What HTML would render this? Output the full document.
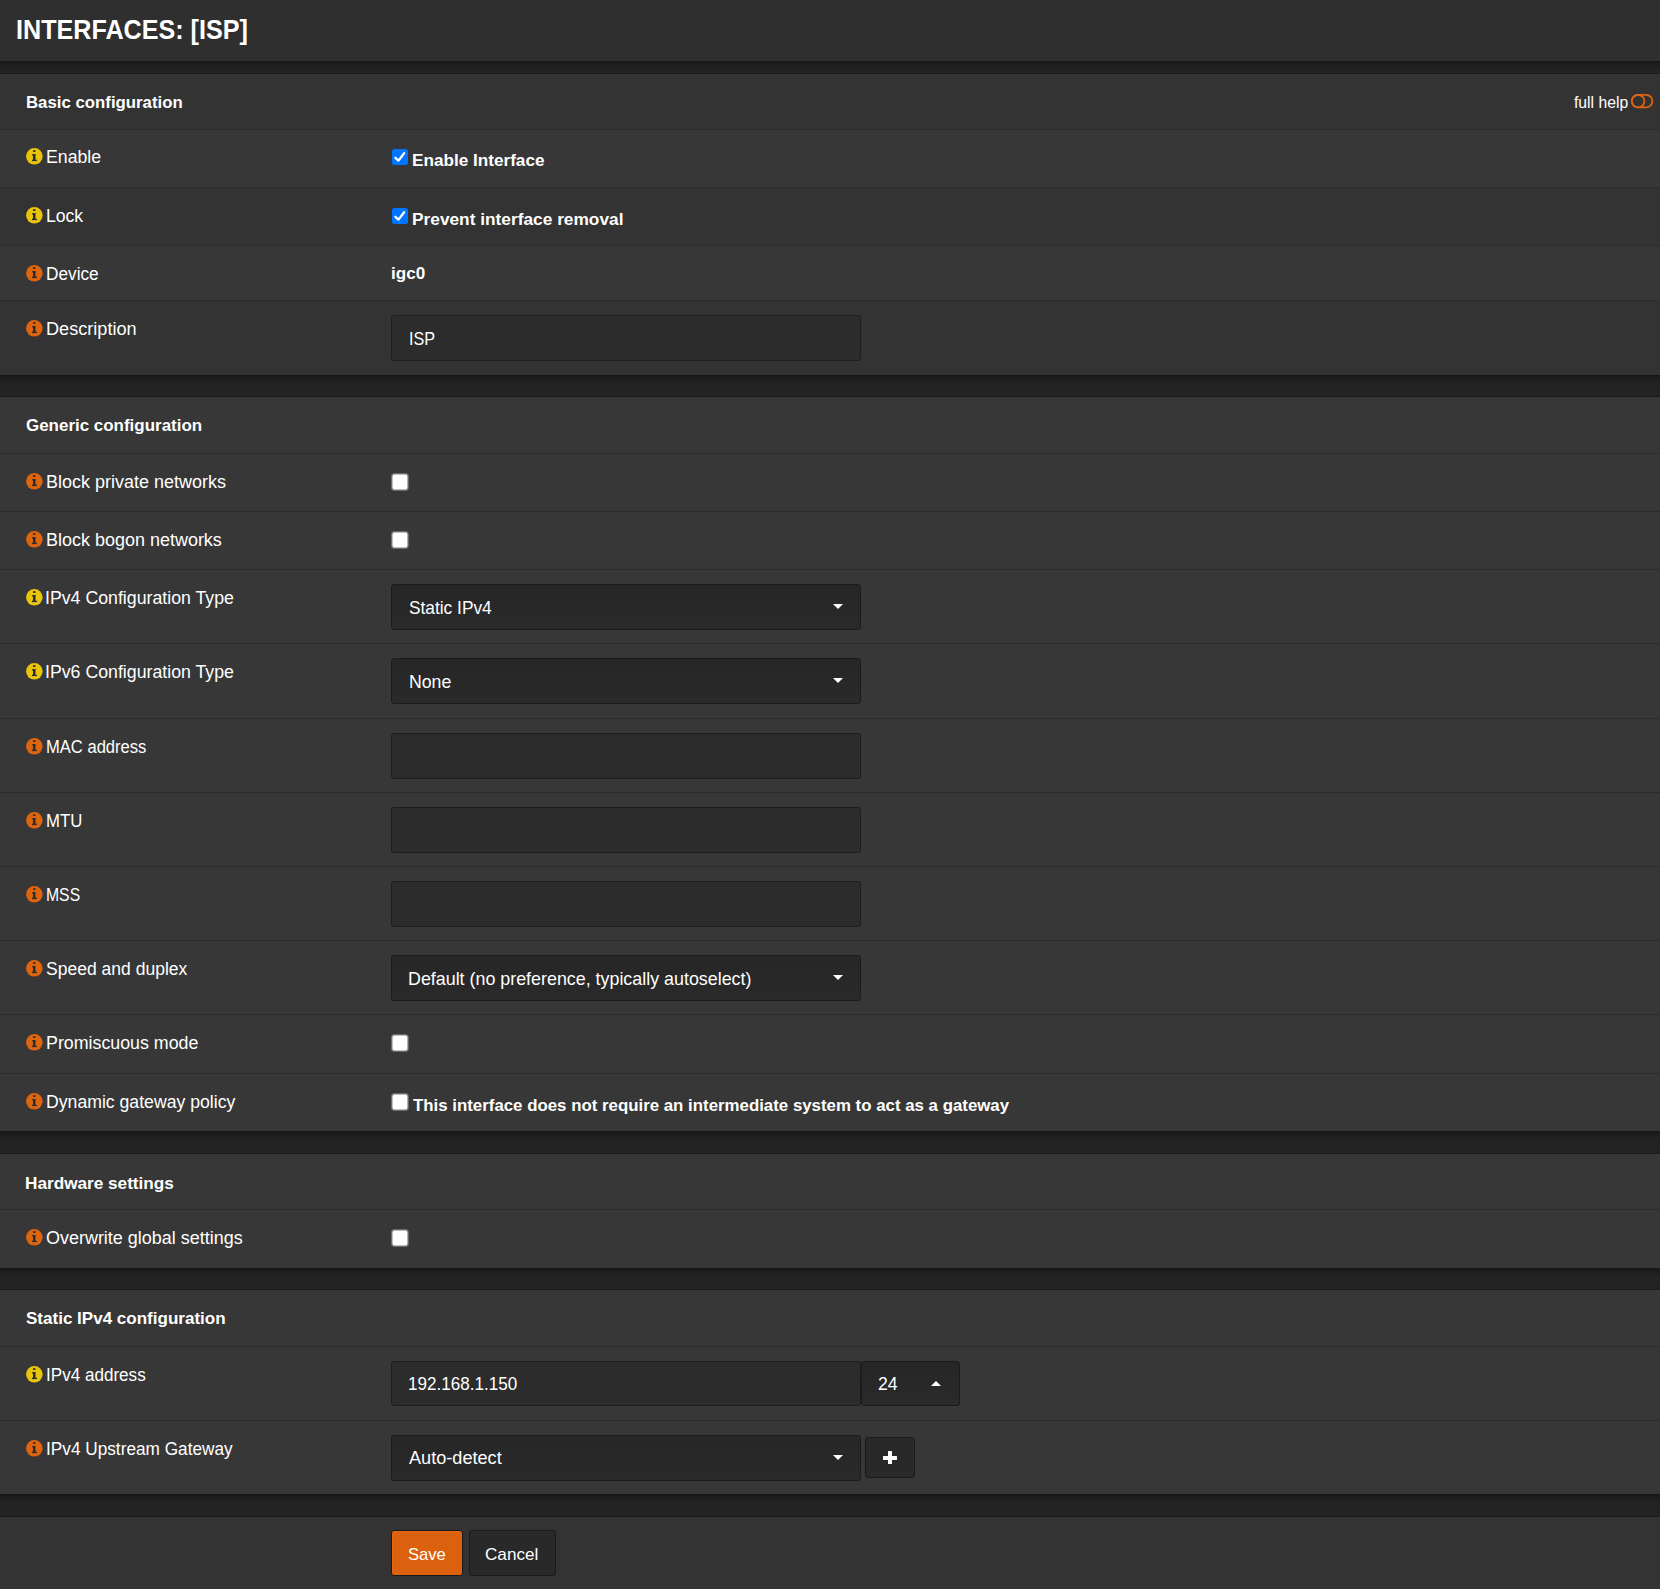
<!DOCTYPE html>
<html><head><meta charset="utf-8"><title>Interfaces: [ISP]</title>
<style>
html,body{margin:0;padding:0}
body{width:1660px;height:1589px;overflow:hidden;position:relative;background:#232323;font-family:"Liberation Sans",sans-serif;color:#fff}
.a{position:absolute}
.t{position:absolute;white-space:nowrap}
</style></head><body>
<div class="a" style="left:0px;top:0px;width:1660px;height:61px;background:#2f2f2f"></div>
<div id="t1" class="t" style="left:15.65px;top:15.50px;font-size:28px;line-height:28px;font-weight:bold;color:#fff;letter-spacing:0px;transform:scaleX(0.8980);transform-origin:0 0;">INTERFACES: [ISP]</div>
<div class="a" style="left:0px;top:61px;width:1660px;height:13px;background:linear-gradient(#161616 0px,#1b1b1b 2px,#1f1f1f 5px,#222 9px,#232323 12px,#232323 12px,#1b1b1b 12px)"></div>
<div class="a" style="left:0px;top:74px;width:1660px;height:55px;background:#333"></div>
<div id="t2" class="t" style="left:25.51px;top:93.61px;font-size:17px;line-height:17px;font-weight:bold;color:#fff;letter-spacing:0px;transform:scaleX(0.9873);transform-origin:0 0;">Basic configuration</div>
<div id="t3" class="t" style="left:1573.60px;top:95.49px;font-size:15.6px;line-height:15.6px;font-weight:normal;color:#fff;letter-spacing:0px;transform:scaleX(1.0076);transform-origin:0 0;">full help</div>
<svg class="a" style="left:1630px;top:93px" width="24" height="16" viewBox="0 0 24 16"><rect x="1.8" y="1.8" width="20.6" height="12.6" rx="6.3" fill="none" stroke="#e0640f" stroke-width="1.7"/><circle cx="8.1" cy="8.1" r="6.3" fill="none" stroke="#e0640f" stroke-width="1.7"/></svg>
<div class="a" style="left:0px;top:129px;width:1660px;height:1px;background:#2c2c2c"></div>
<div class="a" style="left:0px;top:130px;width:1660px;height:57px;background:#373737"></div>
<div class="a" style="left:0px;top:187px;width:1660px;height:1px;background:#2c2c2c"></div>
<svg class="a" style="left:26px;top:148px" width="17" height="17" viewBox="0 0 17 17"><circle cx="8.35" cy="8.3" r="8.3" fill="#e8c40b"/><g fill="#2b2e31"><rect x="7" y="2.2" width="2.5" height="1.7"/><rect x="6" y="6.2" width="3.5" height="1.2"/><rect x="7" y="6.2" width="2.5" height="6"/><rect x="6" y="11.7" width="4.9" height="1.4"/></g></svg>
<div id="t4" class="t" style="left:45.99px;top:148.69px;font-size:17.5px;line-height:17.5px;font-weight:normal;color:#fff;letter-spacing:0px;transform:scaleX(1.0114);transform-origin:0 0;">Enable</div>
<svg class="a" style="left:392px;top:149px" width="16" height="16" viewBox="0 0 16 16"><rect x="0" y="0" width="16" height="16" rx="2.5" fill="#0075ff"/><path d="M3.4 8.8 L6.5 11.6 L12.1 4.2" stroke="#fff" stroke-width="2.3" fill="none" stroke-linecap="round" stroke-linejoin="round"/></svg>
<div id="t5" class="t" style="left:412.18px;top:152.58px;font-size:16.8px;line-height:16.8px;font-weight:bold;color:#fff;letter-spacing:0px;transform:scaleX(1.0219);transform-origin:0 0;">Enable Interface</div>
<div class="a" style="left:0px;top:188px;width:1660px;height:57px;background:#333"></div>
<div class="a" style="left:0px;top:245px;width:1660px;height:1px;background:#2c2c2c"></div>
<svg class="a" style="left:26px;top:207px" width="17" height="17" viewBox="0 0 17 17"><circle cx="8.35" cy="8.3" r="8.3" fill="#e8c40b"/><g fill="#2b2e31"><rect x="7" y="2.2" width="2.5" height="1.7"/><rect x="6" y="6.2" width="3.5" height="1.2"/><rect x="7" y="6.2" width="2.5" height="6"/><rect x="6" y="11.7" width="4.9" height="1.4"/></g></svg>
<div id="t6" class="t" style="left:45.99px;top:207.69px;font-size:17.5px;line-height:17.5px;font-weight:normal;color:#fff;letter-spacing:0px;transform:scaleX(1.0056);transform-origin:0 0;">Lock</div>
<svg class="a" style="left:392px;top:208px" width="16" height="16" viewBox="0 0 16 16"><rect x="0" y="0" width="16" height="16" rx="2.5" fill="#0075ff"/><path d="M3.4 8.8 L6.5 11.6 L12.1 4.2" stroke="#fff" stroke-width="2.3" fill="none" stroke-linecap="round" stroke-linejoin="round"/></svg>
<div id="t7" class="t" style="left:412.17px;top:211.78px;font-size:16.8px;line-height:16.8px;font-weight:bold;color:#fff;letter-spacing:0px;transform:scaleX(1.0305);transform-origin:0 0;">Prevent interface removal</div>
<div class="a" style="left:0px;top:246px;width:1660px;height:54px;background:#373737"></div>
<div class="a" style="left:0px;top:300px;width:1660px;height:1px;background:#2c2c2c"></div>
<svg class="a" style="left:26px;top:265px" width="17" height="17" viewBox="0 0 17 17"><circle cx="8.35" cy="8.3" r="8.3" fill="#df640e"/><g fill="#2b2e31"><rect x="7" y="2.2" width="2.5" height="1.7"/><rect x="6" y="6.2" width="3.5" height="1.2"/><rect x="7" y="6.2" width="2.5" height="6"/><rect x="6" y="11.7" width="4.9" height="1.4"/></g></svg>
<div id="t8" class="t" style="left:46.02px;top:265.69px;font-size:17.5px;line-height:17.5px;font-weight:normal;color:#fff;letter-spacing:0px;transform:scaleX(0.9846);transform-origin:0 0;">Device</div>
<div id="t9" class="t" style="left:390.78px;top:265.78px;font-size:16.8px;line-height:16.8px;font-weight:bold;color:#fff;letter-spacing:0px;transform:scaleX(1.0188);transform-origin:0 0;">igc0</div>
<div class="a" style="left:0px;top:301px;width:1660px;height:74px;background:#333"></div>
<svg class="a" style="left:26px;top:320px" width="17" height="17" viewBox="0 0 17 17"><circle cx="8.35" cy="8.3" r="8.3" fill="#df640e"/><g fill="#2b2e31"><rect x="7" y="2.2" width="2.5" height="1.7"/><rect x="6" y="6.2" width="3.5" height="1.2"/><rect x="7" y="6.2" width="2.5" height="6"/><rect x="6" y="11.7" width="4.9" height="1.4"/></g></svg>
<div id="t10" class="t" style="left:45.97px;top:320.69px;font-size:17.5px;line-height:17.5px;font-weight:normal;color:#fff;letter-spacing:0px;transform:scaleX(1.0349);transform-origin:0 0;">Description</div>
<div class="a" style="left:391px;top:315px;width:470px;height:46px;box-sizing:border-box;background:#2c2c2c;border:1px solid #1d1d1d;border-radius:3px"></div>
<div id="t11" class="t" style="left:409.14px;top:331.02px;font-size:17.7px;line-height:17.7px;font-weight:normal;color:#fff;letter-spacing:0px;transform:scaleX(0.9159);transform-origin:0 0;">ISP</div>
<div class="a" style="left:0px;top:375px;width:1660px;height:22px;background:linear-gradient(#161616 0px,#1b1b1b 2px,#1f1f1f 5px,#222 9px,#232323 12px,#232323 21px,#1b1b1b 21px)"></div>
<div class="a" style="left:0px;top:397px;width:1660px;height:56px;background:#373737"></div>
<div id="t12" class="t" style="left:25.50px;top:417.21px;font-size:17px;line-height:17px;font-weight:bold;color:#fff;letter-spacing:0px;transform:scaleX(0.9971);transform-origin:0 0;">Generic configuration</div>
<div class="a" style="left:0px;top:453px;width:1660px;height:1px;background:#2c2c2c"></div>
<div class="a" style="left:0px;top:454px;width:1660px;height:57px;background:#373737"></div>
<div class="a" style="left:0px;top:511px;width:1660px;height:1px;background:#2c2c2c"></div>
<svg class="a" style="left:26px;top:473px" width="17" height="17" viewBox="0 0 17 17"><circle cx="8.35" cy="8.3" r="8.3" fill="#df640e"/><g fill="#2b2e31"><rect x="7" y="2.2" width="2.5" height="1.7"/><rect x="6" y="6.2" width="3.5" height="1.2"/><rect x="7" y="6.2" width="2.5" height="6"/><rect x="6" y="11.7" width="4.9" height="1.4"/></g></svg>
<div id="t13" class="t" style="left:45.97px;top:473.69px;font-size:17.5px;line-height:17.5px;font-weight:normal;color:#fff;letter-spacing:0px;transform:scaleX(1.0276);transform-origin:0 0;">Block private networks</div>
<svg class="a" style="left:391px;top:473px" width="18" height="18" viewBox="0 0 18 18"><rect x="0.2" y="0.2" width="17.5" height="17.5" rx="3" fill="#7f7f7f"/><rect x="1.5" y="1.5" width="14.9" height="14.9" rx="2" fill="#fff"/></svg>
<div class="a" style="left:0px;top:512px;width:1660px;height:57px;background:#373737"></div>
<div class="a" style="left:0px;top:569px;width:1660px;height:1px;background:#2c2c2c"></div>
<svg class="a" style="left:26px;top:531px" width="17" height="17" viewBox="0 0 17 17"><circle cx="8.35" cy="8.3" r="8.3" fill="#df640e"/><g fill="#2b2e31"><rect x="7" y="2.2" width="2.5" height="1.7"/><rect x="6" y="6.2" width="3.5" height="1.2"/><rect x="7" y="6.2" width="2.5" height="6"/><rect x="6" y="11.7" width="4.9" height="1.4"/></g></svg>
<div id="t14" class="t" style="left:45.97px;top:531.69px;font-size:17.5px;line-height:17.5px;font-weight:normal;color:#fff;letter-spacing:0px;transform:scaleX(1.0271);transform-origin:0 0;">Block bogon networks</div>
<svg class="a" style="left:391px;top:531px" width="18" height="18" viewBox="0 0 18 18"><rect x="0.2" y="0.2" width="17.5" height="17.5" rx="3" fill="#7f7f7f"/><rect x="1.5" y="1.5" width="14.9" height="14.9" rx="2" fill="#fff"/></svg>
<div class="a" style="left:0px;top:570px;width:1660px;height:73px;background:#373737"></div>
<div class="a" style="left:0px;top:643px;width:1660px;height:1px;background:#2c2c2c"></div>
<svg class="a" style="left:26px;top:589px" width="17" height="17" viewBox="0 0 17 17"><circle cx="8.35" cy="8.3" r="8.3" fill="#e8c40b"/><g fill="#2b2e31"><rect x="7" y="2.2" width="2.5" height="1.7"/><rect x="6" y="6.2" width="3.5" height="1.2"/><rect x="7" y="6.2" width="2.5" height="6"/><rect x="6" y="11.7" width="4.9" height="1.4"/></g></svg>
<div id="t15" class="t" style="left:44.97px;top:589.69px;font-size:17.5px;line-height:17.5px;font-weight:normal;color:#fff;letter-spacing:0px;transform:scaleX(1.0130);transform-origin:0 0;">IPv4 Configuration Type</div>
<div class="a" style="left:391px;top:584px;width:470px;height:46px;box-sizing:border-box;background:linear-gradient(#262626,#2a2a2a);border:1px solid #1b1b1b;border-radius:3px"></div>
<div id="t16" class="t" style="left:408.62px;top:599.52px;font-size:17.7px;line-height:17.7px;font-weight:normal;color:#fff;letter-spacing:0px;transform:scaleX(0.9783);transform-origin:0 0;">Static IPv4</div>
<div class="a" style="left:833px;top:604px;width:0;height:0;border-left:5px solid transparent;border-right:5px solid transparent;border-top:5px solid #fff"></div>
<div class="a" style="left:0px;top:644px;width:1660px;height:74px;background:#373737"></div>
<div class="a" style="left:0px;top:718px;width:1660px;height:1px;background:#2c2c2c"></div>
<svg class="a" style="left:26px;top:663px" width="17" height="17" viewBox="0 0 17 17"><circle cx="8.35" cy="8.3" r="8.3" fill="#e8c40b"/><g fill="#2b2e31"><rect x="7" y="2.2" width="2.5" height="1.7"/><rect x="6" y="6.2" width="3.5" height="1.2"/><rect x="7" y="6.2" width="2.5" height="6"/><rect x="6" y="11.7" width="4.9" height="1.4"/></g></svg>
<div id="t17" class="t" style="left:44.97px;top:663.69px;font-size:17.5px;line-height:17.5px;font-weight:normal;color:#fff;letter-spacing:0px;transform:scaleX(1.0130);transform-origin:0 0;">IPv6 Configuration Type</div>
<div class="a" style="left:391px;top:658px;width:470px;height:46px;box-sizing:border-box;background:linear-gradient(#262626,#2a2a2a);border:1px solid #1b1b1b;border-radius:3px"></div>
<div id="t18" class="t" style="left:409.00px;top:673.52px;font-size:17.7px;line-height:17.7px;font-weight:normal;color:#fff;letter-spacing:0px;">None</div>
<div class="a" style="left:833px;top:678px;width:0;height:0;border-left:5px solid transparent;border-right:5px solid transparent;border-top:5px solid #fff"></div>
<div class="a" style="left:0px;top:719px;width:1660px;height:73px;background:#373737"></div>
<div class="a" style="left:0px;top:792px;width:1660px;height:1px;background:#2c2c2c"></div>
<svg class="a" style="left:26px;top:738px" width="17" height="17" viewBox="0 0 17 17"><circle cx="8.35" cy="8.3" r="8.3" fill="#df640e"/><g fill="#2b2e31"><rect x="7" y="2.2" width="2.5" height="1.7"/><rect x="6" y="6.2" width="3.5" height="1.2"/><rect x="7" y="6.2" width="2.5" height="6"/><rect x="6" y="11.7" width="4.9" height="1.4"/></g></svg>
<div id="t19" class="t" style="left:46.05px;top:738.69px;font-size:17.5px;line-height:17.5px;font-weight:normal;color:#fff;letter-spacing:0px;transform:scaleX(0.9467);transform-origin:0 0;">MAC address</div>
<div class="a" style="left:391px;top:733px;width:470px;height:46px;box-sizing:border-box;background:#2c2c2c;border:1px solid #1d1d1d;border-radius:3px"></div>
<div class="a" style="left:0px;top:793px;width:1660px;height:73px;background:#373737"></div>
<div class="a" style="left:0px;top:866px;width:1660px;height:1px;background:#2c2c2c"></div>
<svg class="a" style="left:26px;top:812px" width="17" height="17" viewBox="0 0 17 17"><circle cx="8.35" cy="8.3" r="8.3" fill="#df640e"/><g fill="#2b2e31"><rect x="7" y="2.2" width="2.5" height="1.7"/><rect x="6" y="6.2" width="3.5" height="1.2"/><rect x="7" y="6.2" width="2.5" height="6"/><rect x="6" y="11.7" width="4.9" height="1.4"/></g></svg>
<div id="t20" class="t" style="left:46.04px;top:812.69px;font-size:17.5px;line-height:17.5px;font-weight:normal;color:#fff;letter-spacing:0px;transform:scaleX(0.9556);transform-origin:0 0;">MTU</div>
<div class="a" style="left:391px;top:807px;width:470px;height:46px;box-sizing:border-box;background:#2c2c2c;border:1px solid #1d1d1d;border-radius:3px"></div>
<div class="a" style="left:0px;top:867px;width:1660px;height:73px;background:#373737"></div>
<div class="a" style="left:0px;top:940px;width:1660px;height:1px;background:#2c2c2c"></div>
<svg class="a" style="left:26px;top:886px" width="17" height="17" viewBox="0 0 17 17"><circle cx="8.35" cy="8.3" r="8.3" fill="#df640e"/><g fill="#2b2e31"><rect x="7" y="2.2" width="2.5" height="1.7"/><rect x="6" y="6.2" width="3.5" height="1.2"/><rect x="7" y="6.2" width="2.5" height="6"/><rect x="6" y="11.7" width="4.9" height="1.4"/></g></svg>
<div id="t21" class="t" style="left:46.10px;top:886.69px;font-size:17.5px;line-height:17.5px;font-weight:normal;color:#fff;letter-spacing:0px;transform:scaleX(0.9000);transform-origin:0 0;">MSS</div>
<div class="a" style="left:391px;top:881px;width:470px;height:46px;box-sizing:border-box;background:#2c2c2c;border:1px solid #1d1d1d;border-radius:3px"></div>
<div class="a" style="left:0px;top:941px;width:1660px;height:73px;background:#373737"></div>
<div class="a" style="left:0px;top:1014px;width:1660px;height:1px;background:#2c2c2c"></div>
<svg class="a" style="left:26px;top:960px" width="17" height="17" viewBox="0 0 17 17"><circle cx="8.35" cy="8.3" r="8.3" fill="#df640e"/><g fill="#2b2e31"><rect x="7" y="2.2" width="2.5" height="1.7"/><rect x="6" y="6.2" width="3.5" height="1.2"/><rect x="7" y="6.2" width="2.5" height="6"/><rect x="6" y="11.7" width="4.9" height="1.4"/></g></svg>
<div id="t22" class="t" style="left:46.00px;top:960.69px;font-size:17.5px;line-height:17.5px;font-weight:normal;color:#fff;letter-spacing:0px;transform:scaleX(1.0014);transform-origin:0 0;">Speed and duplex</div>
<div class="a" style="left:391px;top:955px;width:470px;height:46px;box-sizing:border-box;background:linear-gradient(#262626,#2a2a2a);border:1px solid #1b1b1b;border-radius:3px"></div>
<div id="t23" class="t" style="left:408.39px;top:970.52px;font-size:17.7px;line-height:17.7px;font-weight:normal;color:#fff;letter-spacing:0px;transform:scaleX(1.0095);transform-origin:0 0;">Default (no preference, typically autoselect)</div>
<div class="a" style="left:833px;top:975px;width:0;height:0;border-left:5px solid transparent;border-right:5px solid transparent;border-top:5px solid #fff"></div>
<div class="a" style="left:0px;top:1015px;width:1660px;height:58px;background:#373737"></div>
<div class="a" style="left:0px;top:1073px;width:1660px;height:1px;background:#2c2c2c"></div>
<svg class="a" style="left:26px;top:1034px" width="17" height="17" viewBox="0 0 17 17"><circle cx="8.35" cy="8.3" r="8.3" fill="#df640e"/><g fill="#2b2e31"><rect x="7" y="2.2" width="2.5" height="1.7"/><rect x="6" y="6.2" width="3.5" height="1.2"/><rect x="7" y="6.2" width="2.5" height="6"/><rect x="6" y="11.7" width="4.9" height="1.4"/></g></svg>
<div id="t24" class="t" style="left:45.98px;top:1034.69px;font-size:17.5px;line-height:17.5px;font-weight:normal;color:#fff;letter-spacing:0px;transform:scaleX(1.0176);transform-origin:0 0;">Promiscuous mode</div>
<svg class="a" style="left:391px;top:1034px" width="18" height="18" viewBox="0 0 18 18"><rect x="0.2" y="0.2" width="17.5" height="17.5" rx="3" fill="#7f7f7f"/><rect x="1.5" y="1.5" width="14.9" height="14.9" rx="2" fill="#fff"/></svg>
<div class="a" style="left:0px;top:1074px;width:1660px;height:57px;background:#373737"></div>
<svg class="a" style="left:26px;top:1093px" width="17" height="17" viewBox="0 0 17 17"><circle cx="8.35" cy="8.3" r="8.3" fill="#df640e"/><g fill="#2b2e31"><rect x="7" y="2.2" width="2.5" height="1.7"/><rect x="6" y="6.2" width="3.5" height="1.2"/><rect x="7" y="6.2" width="2.5" height="6"/><rect x="6" y="11.7" width="4.9" height="1.4"/></g></svg>
<div id="t25" class="t" style="left:45.99px;top:1093.69px;font-size:17.5px;line-height:17.5px;font-weight:normal;color:#fff;letter-spacing:0px;transform:scaleX(1.0086);transform-origin:0 0;">Dynamic gateway policy</div>
<svg class="a" style="left:391px;top:1093px" width="18" height="18" viewBox="0 0 18 18"><rect x="0.2" y="0.2" width="17.5" height="17.5" rx="3" fill="#7f7f7f"/><rect x="1.5" y="1.5" width="14.9" height="14.9" rx="2" fill="#fff"/></svg>
<div id="t26" class="t" style="left:412.60px;top:1097.78px;font-size:16.8px;line-height:16.8px;font-weight:bold;color:#fff;letter-spacing:0px;transform:scaleX(1.0034);transform-origin:0 0;">This interface does not require an intermediate system to act as a gateway</div>
<div class="a" style="left:0px;top:1131px;width:1660px;height:23px;background:linear-gradient(#161616 0px,#1b1b1b 2px,#1f1f1f 5px,#222 9px,#232323 12px,#232323 22px,#1b1b1b 22px)"></div>
<div class="a" style="left:0px;top:1154px;width:1660px;height:55px;background:#373737"></div>
<div id="t27" class="t" style="left:25.49px;top:1174.61px;font-size:17px;line-height:17px;font-weight:bold;color:#fff;letter-spacing:0px;transform:scaleX(1.0103);transform-origin:0 0;">Hardware settings</div>
<div class="a" style="left:0px;top:1209px;width:1660px;height:1px;background:#2c2c2c"></div>
<div class="a" style="left:0px;top:1210px;width:1660px;height:58px;background:#373737"></div>
<svg class="a" style="left:26px;top:1229px" width="17" height="17" viewBox="0 0 17 17"><circle cx="8.35" cy="8.3" r="8.3" fill="#df640e"/><g fill="#2b2e31"><rect x="7" y="2.2" width="2.5" height="1.7"/><rect x="6" y="6.2" width="3.5" height="1.2"/><rect x="7" y="6.2" width="2.5" height="6"/><rect x="6" y="11.7" width="4.9" height="1.4"/></g></svg>
<div id="t28" class="t" style="left:45.97px;top:1229.69px;font-size:17.5px;line-height:17.5px;font-weight:normal;color:#fff;letter-spacing:0px;transform:scaleX(1.0263);transform-origin:0 0;">Overwrite global settings</div>
<svg class="a" style="left:391px;top:1229px" width="18" height="18" viewBox="0 0 18 18"><rect x="0.2" y="0.2" width="17.5" height="17.5" rx="3" fill="#7f7f7f"/><rect x="1.5" y="1.5" width="14.9" height="14.9" rx="2" fill="#fff"/></svg>
<div class="a" style="left:0px;top:1268px;width:1660px;height:22px;background:linear-gradient(#161616 0px,#1b1b1b 2px,#1f1f1f 5px,#222 9px,#232323 12px,#232323 21px,#1b1b1b 21px)"></div>
<div class="a" style="left:0px;top:1290px;width:1660px;height:56px;background:#373737"></div>
<div id="t29" class="t" style="left:25.50px;top:1310.31px;font-size:17px;line-height:17px;font-weight:bold;color:#fff;letter-spacing:0px;transform:scaleX(1.0015);transform-origin:0 0;">Static IPv4 configuration</div>
<div class="a" style="left:0px;top:1346px;width:1660px;height:1px;background:#2c2c2c"></div>
<div class="a" style="left:0px;top:1347px;width:1660px;height:73px;background:#373737"></div>
<div class="a" style="left:0px;top:1420px;width:1660px;height:1px;background:#2c2c2c"></div>
<svg class="a" style="left:26px;top:1366px" width="17" height="17" viewBox="0 0 17 17"><circle cx="8.35" cy="8.3" r="8.3" fill="#e8c40b"/><g fill="#2b2e31"><rect x="7" y="2.2" width="2.5" height="1.7"/><rect x="6" y="6.2" width="3.5" height="1.2"/><rect x="7" y="6.2" width="2.5" height="6"/><rect x="6" y="11.7" width="4.9" height="1.4"/></g></svg>
<div id="t30" class="t" style="left:46.04px;top:1366.69px;font-size:17.5px;line-height:17.5px;font-weight:normal;color:#fff;letter-spacing:0px;transform:scaleX(0.9760);transform-origin:0 0;">IPv4 address</div>
<div class="a" style="left:391px;top:1361px;width:470px;height:45px;box-sizing:border-box;background:#2c2c2c;border:1px solid #1d1d1d;border-radius:3px"></div>
<div id="t31" class="t" style="left:408.03px;top:1376.02px;font-size:17.7px;line-height:17.7px;font-weight:normal;color:#fff;letter-spacing:0px;transform:scaleX(0.9661);transform-origin:0 0;">192.168.1.150</div>
<div class="a" style="left:861px;top:1361px;width:99px;height:45px;box-sizing:border-box;background:linear-gradient(#262626,#2a2a2a);border:1px solid #1b1b1b;border-radius:3px"></div>
<div id="t32" class="t" style="left:877.60px;top:1376.02px;font-size:17.7px;line-height:17.7px;font-weight:normal;color:#fff;letter-spacing:0px;transform:scaleX(1.0007);transform-origin:0 0;">24</div>
<div class="a" style="left:930.5px;top:1380.5px;width:0;height:0;border-left:5.75px solid transparent;border-right:5.75px solid transparent;border-bottom:5.4px solid #fff"></div>
<div class="a" style="left:0px;top:1421px;width:1660px;height:73px;background:#373737"></div>
<svg class="a" style="left:26px;top:1440px" width="17" height="17" viewBox="0 0 17 17"><circle cx="8.35" cy="8.3" r="8.3" fill="#df640e"/><g fill="#2b2e31"><rect x="7" y="2.2" width="2.5" height="1.7"/><rect x="6" y="6.2" width="3.5" height="1.2"/><rect x="7" y="6.2" width="2.5" height="6"/><rect x="6" y="11.7" width="4.9" height="1.4"/></g></svg>
<div id="t33" class="t" style="left:46.03px;top:1440.69px;font-size:17.5px;line-height:17.5px;font-weight:normal;color:#fff;letter-spacing:0px;transform:scaleX(0.9840);transform-origin:0 0;">IPv4 Upstream Gateway</div>
<div class="a" style="left:391px;top:1435px;width:470px;height:46px;box-sizing:border-box;background:linear-gradient(#262626,#2a2a2a);border:1px solid #1b1b1b;border-radius:3px"></div>
<div id="t34" class="t" style="left:409.00px;top:1450.02px;font-size:17.7px;line-height:17.7px;font-weight:normal;color:#fff;letter-spacing:0px;transform:scaleX(1.0245);transform-origin:0 0;">Auto-detect</div>
<div class="a" style="left:833px;top:1455px;width:0;height:0;border-left:5px solid transparent;border-right:5px solid transparent;border-top:5px solid #fff"></div>
<div class="a" style="left:865px;top:1437px;width:50px;height:41px;box-sizing:border-box;background:#292929;border:1px solid #1b1b1b;border-radius:3px"></div>
<div class="a" style="left:883px;top:1456px;width:14px;height:3.5px;background:#fff;border-radius:0.5px"></div>
<div class="a" style="left:888px;top:1451px;width:4.2px;height:13px;background:#fff;border-radius:0.5px"></div>
<div class="a" style="left:0px;top:1494px;width:1660px;height:23px;background:linear-gradient(#161616 0px,#1b1b1b 2px,#1f1f1f 5px,#222 9px,#232323 12px,#232323 22px,#1b1b1b 22px)"></div>
<div class="a" style="left:0px;top:1517px;width:1660px;height:72px;background:#333"></div>
<div class="a" style="left:391px;top:1530px;width:72px;height:45.5px;box-sizing:border-box;background:#dc610e;border:1px solid #161a1d;border-radius:3px;box-shadow:inset 1px 1px 0 #e6670f"></div>
<div id="t35" class="t" style="left:408.49px;top:1546.95px;font-size:16.6px;line-height:16.6px;font-weight:normal;color:#fff;letter-spacing:0px;transform:scaleX(1.0002);transform-origin:0 0;">Save</div>
<div class="a" style="left:469px;top:1530px;width:87px;height:46px;box-sizing:border-box;background:#292929;border:1px solid #1b1b1b;border-radius:3px"></div>
<div id="t36" class="t" style="left:484.97px;top:1546.95px;font-size:16.6px;line-height:16.6px;font-weight:normal;color:#fff;letter-spacing:0px;transform:scaleX(1.0320);transform-origin:0 0;">Cancel</div>
</body></html>
